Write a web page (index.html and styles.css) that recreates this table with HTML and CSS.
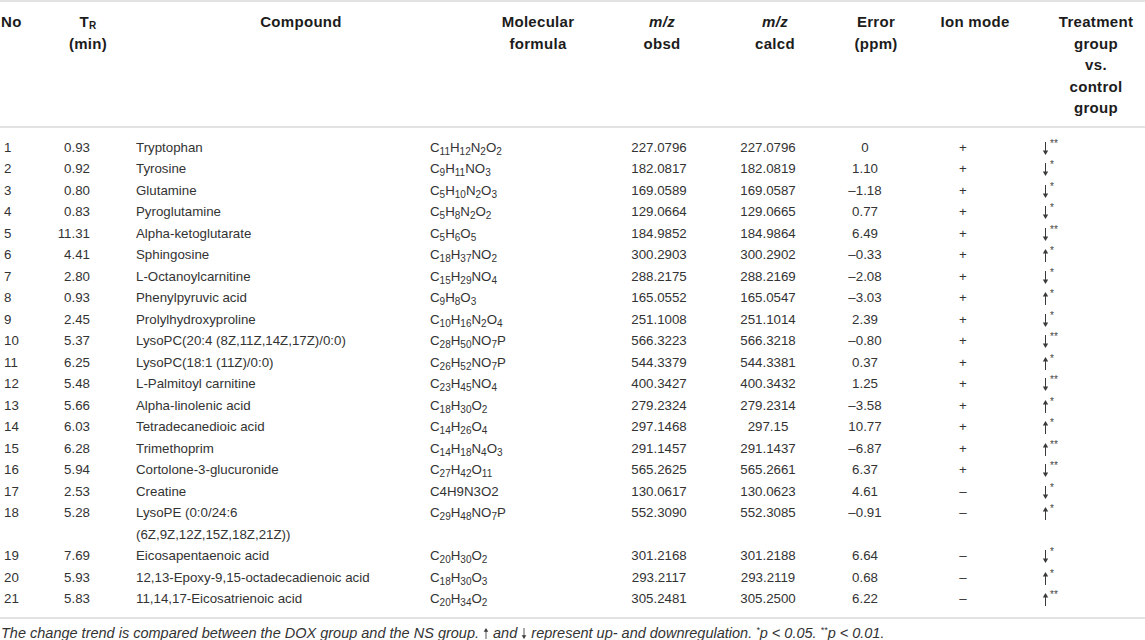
FILE: index.html
```html
<!DOCTYPE html>
<html>
<head>
<meta charset="utf-8">
<link rel="stylesheet" href="styles.css">
</head>
<body>
<svg class="defs" width="0" height="0" aria-hidden="true">
  <defs>
    <g id="adown"><path d="M3.5 0 V10" stroke="#3a3a3a" stroke-width="1" fill="none"/><path d="M0.8 8.6 L3.5 13 L6.2 8.6 Z" fill="#3a3a3a"/></g>
    <g id="aup"><path d="M3.5 3 V13" stroke="#3a3a3a" stroke-width="1" fill="none"/><path d="M0.8 4.4 L3.5 0 L6.2 4.4 Z" fill="#3a3a3a"/></g>
  </defs>
</svg>
<table class="tbl">
<colgroup>
<col class="w-no"><col class="w-tr"><col class="w-cmp"><col class="w-mf"><col class="w-obs"><col class="w-calc"><col class="w-err"><col class="w-ion"><col class="w-trt">
</colgroup>
<thead>
<tr>
<th class="h-no">No</th>
<th class="h-tr">T<sub>R</sub><br>(min)</th>
<th class="h-cmp">Compound</th>
<th class="h-mf">Molecular<br>formula</th>
<th class="h-obs"><i>m/z</i><br>obsd</th>
<th class="h-calc"><i>m/z</i><br>calcd</th>
<th class="h-err">Error<br>(ppm)</th>
<th class="h-ion">Ion mode</th>
<th class="h-trt">Treatment<br>group<br>vs.<br>control<br>group</th>
</tr>
</thead>
<tbody>
<tr class="first"><td class="c-no">1</td><td class="c-tr">0.93</td><td class="c-cmp">Tryptophan</td><td class="c-mf">C<sub>11</sub>H<sub>12</sub>N<sub>2</sub>O<sub>2</sub></td><td class="c-obs">227.0796</td><td class="c-calc">227.0796</td><td class="c-err">0</td><td class="c-ion">+</td><td class="c-trt"><svg class="arr" viewBox="0 0 7 13"><use href="#adown"/></svg><sup>**</sup></td></tr>
<tr><td class="c-no">2</td><td class="c-tr">0.92</td><td class="c-cmp">Tyrosine</td><td class="c-mf">C<sub>9</sub>H<sub>11</sub>NO<sub>3</sub></td><td class="c-obs">182.0817</td><td class="c-calc">182.0819</td><td class="c-err">1.10</td><td class="c-ion">+</td><td class="c-trt"><svg class="arr" viewBox="0 0 7 13"><use href="#adown"/></svg><sup>*</sup></td></tr>
<tr><td class="c-no">3</td><td class="c-tr">0.80</td><td class="c-cmp">Glutamine</td><td class="c-mf">C<sub>5</sub>H<sub>10</sub>N<sub>2</sub>O<sub>3</sub></td><td class="c-obs">169.0589</td><td class="c-calc">169.0587</td><td class="c-err">–1.18</td><td class="c-ion">+</td><td class="c-trt"><svg class="arr" viewBox="0 0 7 13"><use href="#adown"/></svg><sup>*</sup></td></tr>
<tr><td class="c-no">4</td><td class="c-tr">0.83</td><td class="c-cmp">Pyroglutamine</td><td class="c-mf">C<sub>5</sub>H<sub>8</sub>N<sub>2</sub>O<sub>2</sub></td><td class="c-obs">129.0664</td><td class="c-calc">129.0665</td><td class="c-err">0.77</td><td class="c-ion">+</td><td class="c-trt"><svg class="arr" viewBox="0 0 7 13"><use href="#adown"/></svg><sup>*</sup></td></tr>
<tr><td class="c-no">5</td><td class="c-tr">11.31</td><td class="c-cmp">Alpha-ketoglutarate</td><td class="c-mf">C<sub>5</sub>H<sub>6</sub>O<sub>5</sub></td><td class="c-obs">184.9852</td><td class="c-calc">184.9864</td><td class="c-err">6.49</td><td class="c-ion">+</td><td class="c-trt"><svg class="arr" viewBox="0 0 7 13"><use href="#adown"/></svg><sup>**</sup></td></tr>
<tr><td class="c-no">6</td><td class="c-tr">4.41</td><td class="c-cmp">Sphingosine</td><td class="c-mf">C<sub>18</sub>H<sub>37</sub>NO<sub>2</sub></td><td class="c-obs">300.2903</td><td class="c-calc">300.2902</td><td class="c-err">–0.33</td><td class="c-ion">+</td><td class="c-trt"><svg class="arr" viewBox="0 0 7 13"><use href="#aup"/></svg><sup>*</sup></td></tr>
<tr><td class="c-no">7</td><td class="c-tr">2.80</td><td class="c-cmp">L-Octanoylcarnitine</td><td class="c-mf">C<sub>15</sub>H<sub>29</sub>NO<sub>4</sub></td><td class="c-obs">288.2175</td><td class="c-calc">288.2169</td><td class="c-err">–2.08</td><td class="c-ion">+</td><td class="c-trt"><svg class="arr" viewBox="0 0 7 13"><use href="#adown"/></svg><sup>*</sup></td></tr>
<tr><td class="c-no">8</td><td class="c-tr">0.93</td><td class="c-cmp">Phenylpyruvic acid</td><td class="c-mf">C<sub>9</sub>H<sub>8</sub>O<sub>3</sub></td><td class="c-obs">165.0552</td><td class="c-calc">165.0547</td><td class="c-err">–3.03</td><td class="c-ion">+</td><td class="c-trt"><svg class="arr" viewBox="0 0 7 13"><use href="#aup"/></svg><sup>*</sup></td></tr>
<tr><td class="c-no">9</td><td class="c-tr">2.45</td><td class="c-cmp">Prolylhydroxyproline</td><td class="c-mf">C<sub>10</sub>H<sub>16</sub>N<sub>2</sub>O<sub>4</sub></td><td class="c-obs">251.1008</td><td class="c-calc">251.1014</td><td class="c-err">2.39</td><td class="c-ion">+</td><td class="c-trt"><svg class="arr" viewBox="0 0 7 13"><use href="#adown"/></svg><sup>*</sup></td></tr>
<tr><td class="c-no">10</td><td class="c-tr">5.37</td><td class="c-cmp">LysoPC(20:4 (8Z,11Z,14Z,17Z)/0:0)</td><td class="c-mf">C<sub>28</sub>H<sub>50</sub>NO<sub>7</sub>P</td><td class="c-obs">566.3223</td><td class="c-calc">566.3218</td><td class="c-err">–0.80</td><td class="c-ion">+</td><td class="c-trt"><svg class="arr" viewBox="0 0 7 13"><use href="#adown"/></svg><sup>**</sup></td></tr>
<tr><td class="c-no">11</td><td class="c-tr">6.25</td><td class="c-cmp">LysoPC(18:1 (11Z)/0:0)</td><td class="c-mf">C<sub>26</sub>H<sub>52</sub>NO<sub>7</sub>P</td><td class="c-obs">544.3379</td><td class="c-calc">544.3381</td><td class="c-err">0.37</td><td class="c-ion">+</td><td class="c-trt"><svg class="arr" viewBox="0 0 7 13"><use href="#aup"/></svg><sup>*</sup></td></tr>
<tr><td class="c-no">12</td><td class="c-tr">5.48</td><td class="c-cmp">L-Palmitoyl carnitine</td><td class="c-mf">C<sub>23</sub>H<sub>45</sub>NO<sub>4</sub></td><td class="c-obs">400.3427</td><td class="c-calc">400.3432</td><td class="c-err">1.25</td><td class="c-ion">+</td><td class="c-trt"><svg class="arr" viewBox="0 0 7 13"><use href="#adown"/></svg><sup>**</sup></td></tr>
<tr><td class="c-no">13</td><td class="c-tr">5.66</td><td class="c-cmp">Alpha-linolenic acid</td><td class="c-mf">C<sub>18</sub>H<sub>30</sub>O<sub>2</sub></td><td class="c-obs">279.2324</td><td class="c-calc">279.2314</td><td class="c-err">–3.58</td><td class="c-ion">+</td><td class="c-trt"><svg class="arr" viewBox="0 0 7 13"><use href="#aup"/></svg><sup>*</sup></td></tr>
<tr><td class="c-no">14</td><td class="c-tr">6.03</td><td class="c-cmp">Tetradecanedioic acid</td><td class="c-mf">C<sub>14</sub>H<sub>26</sub>O<sub>4</sub></td><td class="c-obs">297.1468</td><td class="c-calc">297.15</td><td class="c-err">10.77</td><td class="c-ion">+</td><td class="c-trt"><svg class="arr" viewBox="0 0 7 13"><use href="#aup"/></svg><sup>*</sup></td></tr>
<tr><td class="c-no">15</td><td class="c-tr">6.28</td><td class="c-cmp">Trimethoprim</td><td class="c-mf">C<sub>14</sub>H<sub>18</sub>N<sub>4</sub>O<sub>3</sub></td><td class="c-obs">291.1457</td><td class="c-calc">291.1437</td><td class="c-err">–6.87</td><td class="c-ion">+</td><td class="c-trt"><svg class="arr" viewBox="0 0 7 13"><use href="#aup"/></svg><sup>**</sup></td></tr>
<tr><td class="c-no">16</td><td class="c-tr">5.94</td><td class="c-cmp">Cortolone-3-glucuronide</td><td class="c-mf">C<sub>27</sub>H<sub>42</sub>O<sub>11</sub></td><td class="c-obs">565.2625</td><td class="c-calc">565.2661</td><td class="c-err">6.37</td><td class="c-ion">+</td><td class="c-trt"><svg class="arr" viewBox="0 0 7 13"><use href="#adown"/></svg><sup>**</sup></td></tr>
<tr><td class="c-no">17</td><td class="c-tr">2.53</td><td class="c-cmp">Creatine</td><td class="c-mf">C4H9N3O2</td><td class="c-obs">130.0617</td><td class="c-calc">130.0623</td><td class="c-err">4.61</td><td class="c-ion">–</td><td class="c-trt"><svg class="arr" viewBox="0 0 7 13"><use href="#adown"/></svg><sup>*</sup></td></tr>
<tr><td class="c-no">18</td><td class="c-tr">5.28</td><td class="c-cmp">LysoPE (0:0/24:6<br>(6Z,9Z,12Z,15Z,18Z,21Z))</td><td class="c-mf">C<sub>29</sub>H<sub>48</sub>NO<sub>7</sub>P</td><td class="c-obs">552.3090</td><td class="c-calc">552.3085</td><td class="c-err">–0.91</td><td class="c-ion">–</td><td class="c-trt"><svg class="arr" viewBox="0 0 7 13"><use href="#aup"/></svg><sup>*</sup></td></tr>
<tr><td class="c-no">19</td><td class="c-tr">7.69</td><td class="c-cmp">Eicosapentaenoic acid</td><td class="c-mf">C<sub>20</sub>H<sub>30</sub>O<sub>2</sub></td><td class="c-obs">301.2168</td><td class="c-calc">301.2188</td><td class="c-err">6.64</td><td class="c-ion">–</td><td class="c-trt"><svg class="arr" viewBox="0 0 7 13"><use href="#adown"/></svg><sup>*</sup></td></tr>
<tr><td class="c-no">20</td><td class="c-tr">5.93</td><td class="c-cmp">12,13-Epoxy-9,15-octadecadienoic acid</td><td class="c-mf">C<sub>18</sub>H<sub>30</sub>O<sub>3</sub></td><td class="c-obs">293.2117</td><td class="c-calc">293.2119</td><td class="c-err">0.68</td><td class="c-ion">–</td><td class="c-trt"><svg class="arr" viewBox="0 0 7 13"><use href="#aup"/></svg><sup>*</sup></td></tr>
<tr class="last"><td class="c-no">21</td><td class="c-tr">5.83</td><td class="c-cmp">11,14,17-Eicosatrienoic acid</td><td class="c-mf">C<sub>20</sub>H<sub>34</sub>O<sub>2</sub></td><td class="c-obs">305.2481</td><td class="c-calc">305.2500</td><td class="c-err">6.22</td><td class="c-ion">–</td><td class="c-trt"><svg class="arr" viewBox="0 0 7 13"><use href="#aup"/></svg><sup>**</sup></td></tr>
</tbody>
</table>
<p class="note">The change trend is compared between the DOX group and the NS group. <svg class="narr" viewBox="0 0 7 13"><use href="#aup"/></svg> and <svg class="narr" viewBox="0 0 7 13"><use href="#adown"/></svg> represent up- and downregulation. <sup>*</sup>p &lt; 0.05. <sup>**</sup>p &lt; 0.01.</p>
</body>
</html>
```
FILE: styles.css
```css
html, body {
  margin: 0;
  padding: 0;
  background: #ffffff;
}
body {
  font-family: "Liberation Sans", Arial, sans-serif;
  color: #333333;
  width: 1145px;
}
.defs {
  position: absolute;
  width: 0;
  height: 0;
  overflow: hidden;
}
.tbl {
  width: 1145px;
  border-collapse: collapse;
  table-layout: fixed;
}
.w-no { width: 50px; }
.w-tr { width: 76px; }
.w-cmp { width: 294px; }
.w-mf { width: 180px; }
.w-obs { width: 112px; }
.w-calc { width: 108px; }
.w-err { width: 90px; }
.w-ion { width: 120px; }
.w-trt { width: 115px; }

.tbl thead tr {
  border-top: 2px solid #e2e2e2;
  border-bottom: 2px solid #e2e2e2;
}
.tbl th {
  font-weight: bold;
  font-size: 15px;
  letter-spacing: 0.3px;
  line-height: 21.6px;
  color: #1c1c1c;
  vertical-align: top;
  padding: 9px 0 7px 0;
  text-align: center;
}
.tbl th sub {
  font-size: 10px;
  vertical-align: -2px;
  line-height: 0;
}
.h-no { text-align: left !important; padding-left: 1px !important; }
.h-cmp { padding-left: 56px !important; }
.h-mf { padding-left: 56px !important; }
.h-obs { padding-left: 12px !important; }
.h-calc { padding-left: 18px !important; }
.h-err { padding-left: 22px !important; }
.h-ion { padding-left: 10px !important; }
.h-trt { padding-left: 17px !important; }

.tbl td {
  font-size: 13.3px;
  line-height: 21.5px;
  padding: 0;
  vertical-align: top;
  white-space: nowrap;
}
.tbl td sub {
  font-size: 10px;
  vertical-align: -3px;
  line-height: 0;
}
.tbl td sup {
  font-size: 10px;
  vertical-align: 5px;
  line-height: 0;
  margin-left: 1px;
  color: #444444;
}
.arr {
  width: 7px;
  height: 13px;
  vertical-align: -3px;
}
.tbl tr.first td { padding-top: 9px; }
.tbl tr.last td { padding-bottom: 7px; }
.tbl tbody tr.last { border-bottom: 2px solid #e2e2e2; }

.c-no { text-align: left; padding-left: 4px !important; }
.c-tr { text-align: right; padding-right: 36px !important; }
.c-cmp { text-align: left; padding-left: 10px !important; }
.c-mf { text-align: left; padding-left: 10px !important; }
.c-obs { text-align: center; padding-left: 6px !important; }
.c-calc { text-align: center; padding-left: 4px !important; }
.c-err { text-align: center; }
.c-ion { text-align: center; padding-right: 14px !important; }
.c-trt { text-align: left; padding-left: 12px !important; }

.note {
  margin: 0;
  padding: 5px 0 0 1px;
  font-size: 14.5px;
  line-height: 19px;
  font-style: italic;
  color: #333333;
  white-space: nowrap;
}
.narr {
  width: 6px;
  height: 11px;
  vertical-align: -1px;
}
.note sup {
  font-size: 9px;
  vertical-align: 5px;
  line-height: 0;
}
```
